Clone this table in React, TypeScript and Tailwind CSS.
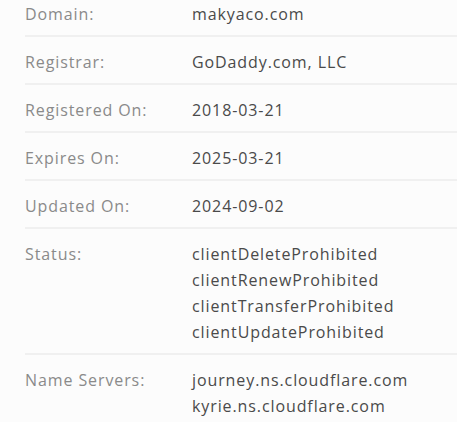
import React from 'react';

const rows: { label: string; values: string[] }[] = [
  { label: 'Domain:', values: ['makyaco.com'] },
  { label: 'Registrar:', values: ['GoDaddy.com, LLC'] },
  { label: 'Registered On:', values: ['2018-03-21'] },
  { label: 'Expires On:', values: ['2025-03-21'] },
  { label: 'Updated On:', values: ['2024-09-02'] },
  {
    label: 'Status:',
    values: ['clientDeleteProhibited', 'clientRenewProhibited', 'clientTransferProhibited', 'clientUpdateProhibited'],
  },
  { label: 'Name Servers:', values: ['journey.ns.cloudflare.com', 'kyrie.ns.cloudflare.com'] },
];

const App: React.FC = () => {
  return (
    <div className="w-[457px] bg-white font-['Open_Sans',sans-serif]">
      <div className="bg-[#fcfcfc] pl-[25px]">
        {rows.map((row, i) => {
          const first = i === 0;
          const last = i === rows.length - 1;
          return (
            <div
              key={row.label}
              className={`flex text-[16px] tracking-[0.9px] leading-[26px] ${first ? 'pt-[1px]' : 'pt-3'} ${
                last ? 'pb-[3px]' : 'pb-2 border-b-2 border-[#f0f0f0]'
              }`}
            >
              <div className="w-[167px] shrink-0 text-[#8a8a8a]">{row.label}</div>
              <div className="text-[#4a4a4a]">
                {row.values.map((v) => (
                  <div key={v}>{v}</div>
                ))}
              </div>
            </div>
          );
        })}
      </div>
    </div>
  );
};

export default App;
